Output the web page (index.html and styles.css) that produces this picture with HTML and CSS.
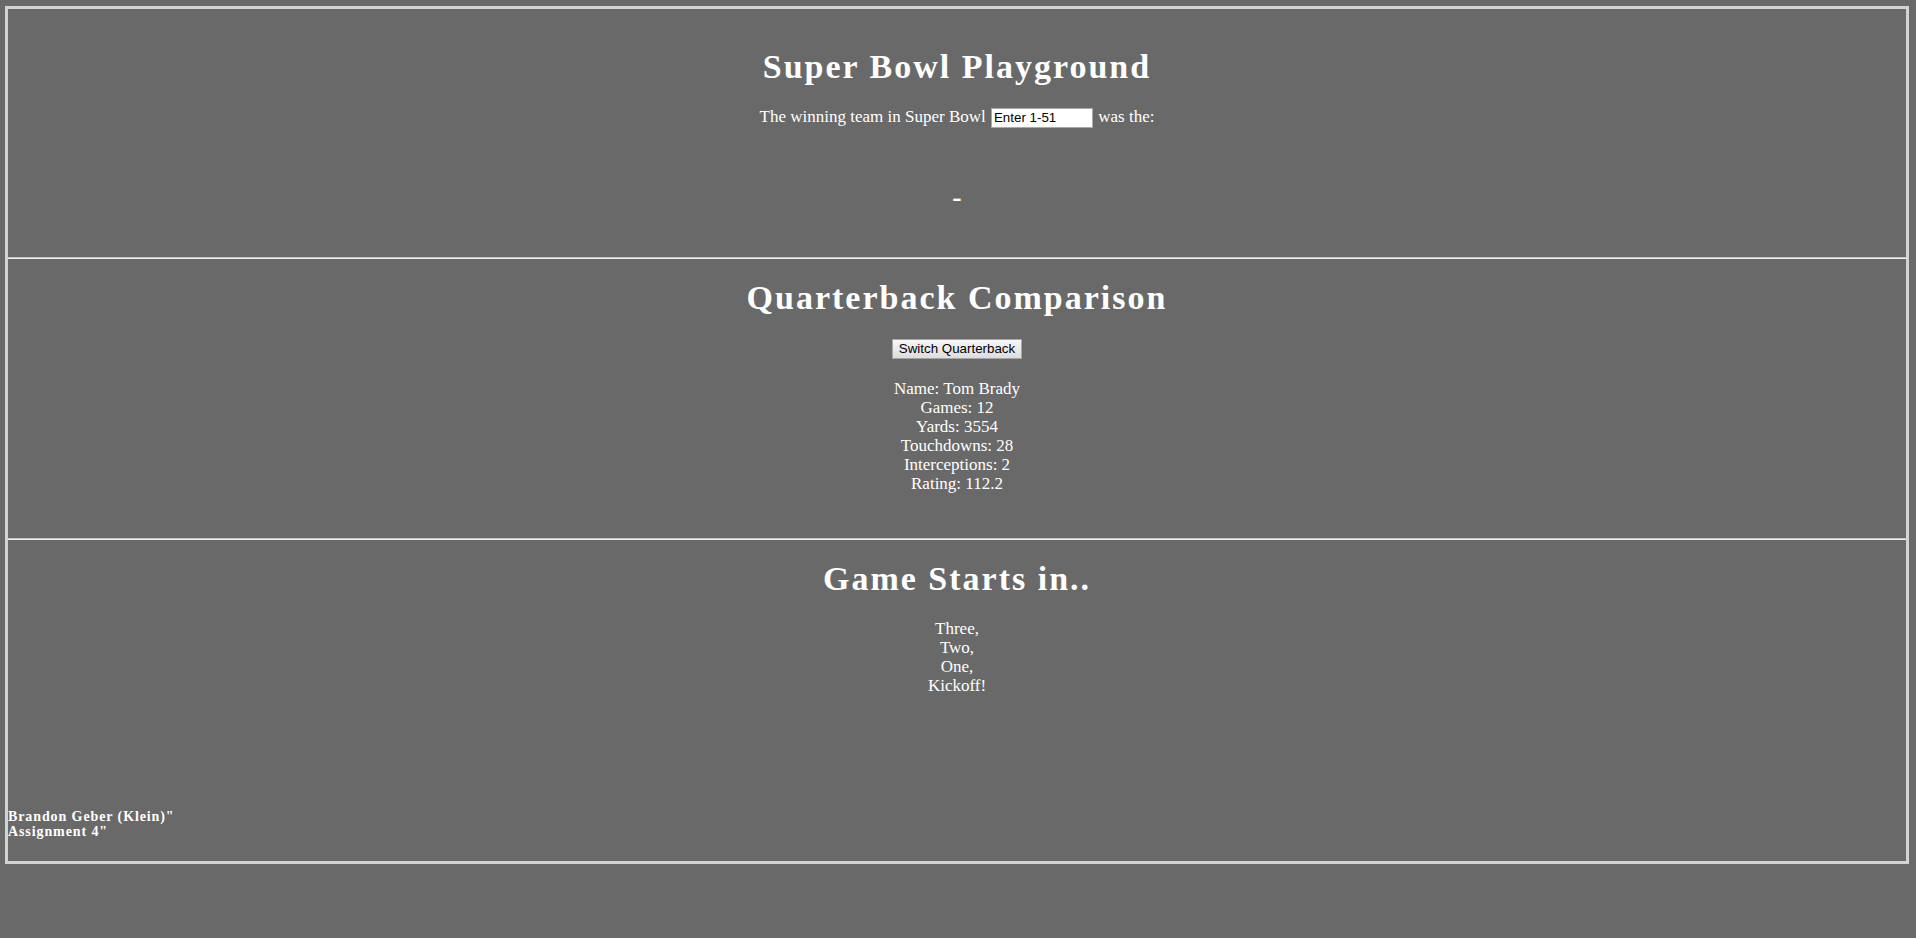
FILE: index.html
```html
<!DOCTYPE html>
<html lang="en">
<head>
<meta charset="utf-8">
<title>Super Bowl Playground</title>
<link rel="stylesheet" href="styles.css">
</head>
<body>
<div class="frame">
  <section class="panel panel-first">
    <h1 class="title">Super Bowl Playground</h1>
    <p class="query">The winning team in Super Bowl <input class="bowl-input" type="text" value="Enter 1-51"> was the:</p>
    <h2 class="winner">-</h2>
  </section>
  <hr class="rule">
  <section class="panel panel-mid">
    <h1 class="title">Quarterback Comparison</h1>
    <button class="switch-btn" type="button">Switch Quarterback</button>
    <div class="stats">
      <div>Name: Tom Brady</div>
      <div>Games: 12</div>
      <div>Yards: 3554</div>
      <div>Touchdowns: 28</div>
      <div>Interceptions: 2</div>
      <div>Rating: 112.2</div>
    </div>
  </section>
  <hr class="rule">
  <section class="panel panel-last">
    <h1 class="title">Game Starts in..</h1>
    <div class="countdown">
      <div>Three,</div>
      <div>Two,</div>
      <div>One,</div>
      <div>Kickoff!</div>
    </div>
    <h5 class="credit">Brandon Geber (Klein)"<br>Assignment 4"</h5>
  </section>
</div>
</body>
</html>
```

FILE: styles.css
```css
html, body {
  margin: 0;
  padding: 0;
  background: #696969;
}

body {
  padding-top: 6px;
  color: #ffffff;
  font-family: "Liberation Serif", "Times New Roman", serif;
  font-size: 17px;
}

.frame {
  margin: 0 7px 0 5px;
  border: 3px solid #d3d3d3;
}

.panel {
  text-align: center;
}

.panel-first {
  padding: 38px 0 45px;
}

.panel-mid {
  padding: 19px 0 45px;
}

.panel-last {
  padding: 19px 0 0;
}

.title {
  margin: 0;
  font-size: 34px;
  line-height: 40px;
  font-weight: bold;
  letter-spacing: 2px;
}

.query {
  margin: 20px 0 0;
  line-height: 20px;
}

.bowl-input {
  box-sizing: border-box;
  width: 102px;
  height: 20px;
  margin: 0 1px;
  padding: 1px 2px;
  border: 1px solid #a9a9a9;
  background: #ffffff;
  color: #000000;
  font-family: "Liberation Sans", Arial, sans-serif;
  font-size: 13.33px;
  vertical-align: baseline;
}

.winner {
  margin: 54px 0 0;
  font-size: 28px;
  line-height: 30px;
  font-weight: bold;
}

.rule {
  margin: 0;
  height: 0;
  border: 0;
  border-top: 1px solid #c4c4c4;
  border-bottom: 1px solid #efefef;
}

.switch-btn {
  display: block;
  box-sizing: border-box;
  height: 20px;
  margin: 21px auto 0;
  padding: 0 6px;
  border: 1px solid #a6a6a6;
  border-radius: 0;
  background: linear-gradient(#f7f7f7, #dddddd);
  color: #000000;
  font-family: "Liberation Sans", Arial, sans-serif;
  font-size: 13.33px;
  line-height: 18px;
}

.stats {
  margin-top: 20px;
  line-height: 19px;
}

.countdown {
  margin-top: 20px;
  line-height: 19px;
}

.credit {
  margin: 114px 0 22px;
  text-align: left;
  font-size: 14px;
  line-height: 15px;
  font-weight: bold;
  letter-spacing: 0.9px;
}
```
